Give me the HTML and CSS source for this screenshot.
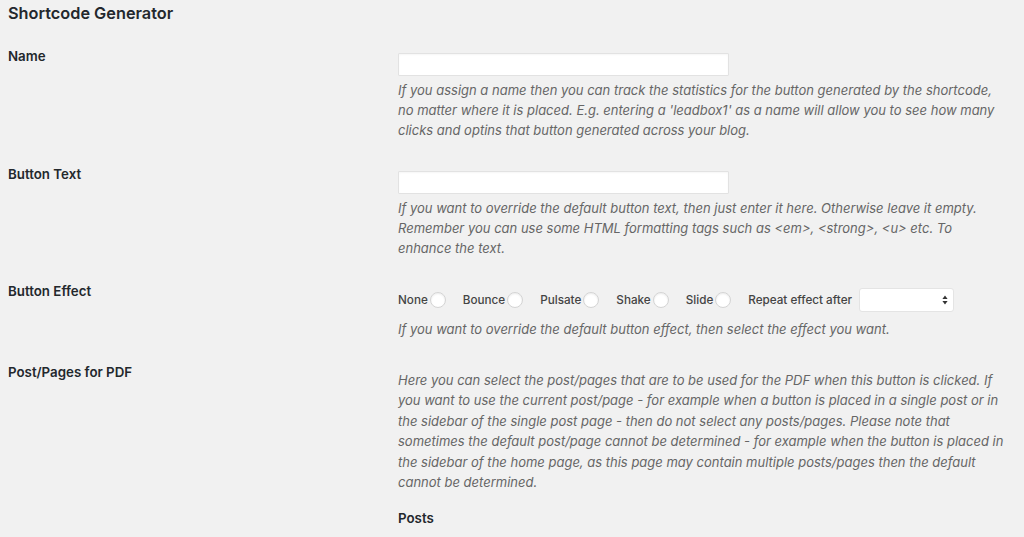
FILE: index.html
```html
<!DOCTYPE html>
<html lang="en">
<head>
<meta charset="utf-8">
<title>Shortcode Generator</title>
<link rel="stylesheet" href="styles.css">
</head>
<body>
<div class="wrap">
  <h2 class="title">Shortcode Generator</h2>

  <div class="row row-name">
    <div class="label">Name</div>
    <div class="field">
      <input class="text-input" type="text">
      <p class="desc">If you assign a name then you can track the statistics for the button generated by the shortcode, no matter where it is placed. E.g. entering a 'leadbox1' as a name will allow you to see how many clicks and optins that button generated across your blog.</p>
    </div>
  </div>

  <div class="row row-text">
    <div class="label">Button Text</div>
    <div class="field">
      <input class="text-input" type="text">
      <p class="desc">If you want to override the default button text, then just enter it here. Otherwise leave it empty. Remember you can use some HTML formatting tags such as &lt;em&gt;, &lt;strong&gt;, &lt;u&gt; etc. To enhance the text.</p>
    </div>
  </div>

  <div class="row row-effect">
    <div class="label">Button Effect</div>
    <div class="field">
      <div class="effects">
        <label class="effect">None <span class="radio"></span></label>
        <label class="effect">Bounce <span class="radio"></span></label>
        <label class="effect">Pulsate <span class="radio"></span></label>
        <label class="effect">Shake <span class="radio"></span></label>
        <label class="effect">Slide <span class="radio"></span></label>
        <span class="effect repeat">Repeat effect after</span>
        <span class="select"><svg class="arrows" width="6" height="10" viewBox="0 0 6 10"><path d="M3 0.5 L5.6 4 H0.4 Z M3 9.5 L0.4 6 H5.6 Z" fill="#333"/></svg></span>
      </div>
      <p class="desc desc-effect">If you want to override the default button effect, then select the effect you want.</p>
    </div>
  </div>

  <div class="row row-pages">
    <div class="label">Post/Pages for PDF</div>
    <div class="field">
      <p class="desc desc-pages">Here you can select the post/pages that are to be used for the PDF when this button is clicked. If you want to use the current post/page - for example when a button is placed in a single post or in the sidebar of the single post page - then do not select any posts/pages. Please note that sometimes the default post/page cannot be determined - for example when the button is placed in the sidebar of the home page, as this page may contain multiple posts/pages then the default cannot be determined.</p>
      <div class="sub-label">Posts</div>
    </div>
  </div>
</div>
</body>
</html>
```

FILE: styles.css
```css
html, body {
  margin: 0;
  padding: 0;
  background: #f1f1f1;
  height: 100%;
  overflow: hidden;
}

body {
  font-family: Inter, "Liberation Sans", Arial, sans-serif;
  color: #23282d;
}

.wrap {
  padding: 0 0 0 8px;
}

.title {
  margin: 0;
  padding-top: 3px;
  font-size: 16.3px;
  line-height: 20px;
  font-weight: 600;
  color: #23282d;
}

.row {
  display: grid;
  grid-template-columns: 390px 607px;
}

.label {
  font-size: 13.3px;
  line-height: 20px;
  font-weight: 600;
  color: #23282d;
}

.field {
  padding-top: 7px;
}

.row-name { margin-top: 23px; }
.row-text { margin-top: 24px; }
.row-effect { margin-top: 23px; }
.row-pages { margin-top: 23px; }

.text-input {
  display: block;
  box-sizing: border-box;
  width: 331px;
  height: 23px;
  margin: 0;
  padding: 0;
  background: #fff;
  border: 1px solid #e2e2e2;
  border-radius: 1px;
  box-shadow: inset 0 1px 2px rgba(0, 0, 0, 0.04);
}

.desc {
  margin: 4px 0 0;
  font-size: 13px;
  line-height: 20px;
  font-style: italic;
  color: #666;
}

.effects {
  display: flex;
  align-items: center;
  height: 24px;
}

.effect {
  display: flex;
  align-items: center;
  gap: 2px;
  font-size: 11.7px;
  font-weight: 500;
  color: #444;
  margin-right: 17px;
}

.effect.repeat {
  margin-right: 7px;
}

.radio {
  display: inline-block;
  box-sizing: border-box;
  width: 16px;
  height: 16px;
  border-radius: 50%;
  background: #fff;
  border: 1px solid #d4d4d4;
  box-shadow: inset 0 1px 2px rgba(0, 0, 0, 0.08);
}

.select {
  position: relative;
  box-sizing: border-box;
  width: 95px;
  height: 24px;
  background: #fff;
  border: 1px solid #e4e4e4;
  border-radius: 3px;
}

.arrows {
  position: absolute;
  right: 5px;
  top: 6px;
}

.desc-effect {
  margin-top: 7px;
}

.desc-pages {
  margin-top: 1px;
  line-height: 20.4px;
}

.sub-label {
  margin-top: 16px;
  font-size: 13.3px;
  line-height: 20px;
  font-weight: 600;
  color: #23282d;
}
```
